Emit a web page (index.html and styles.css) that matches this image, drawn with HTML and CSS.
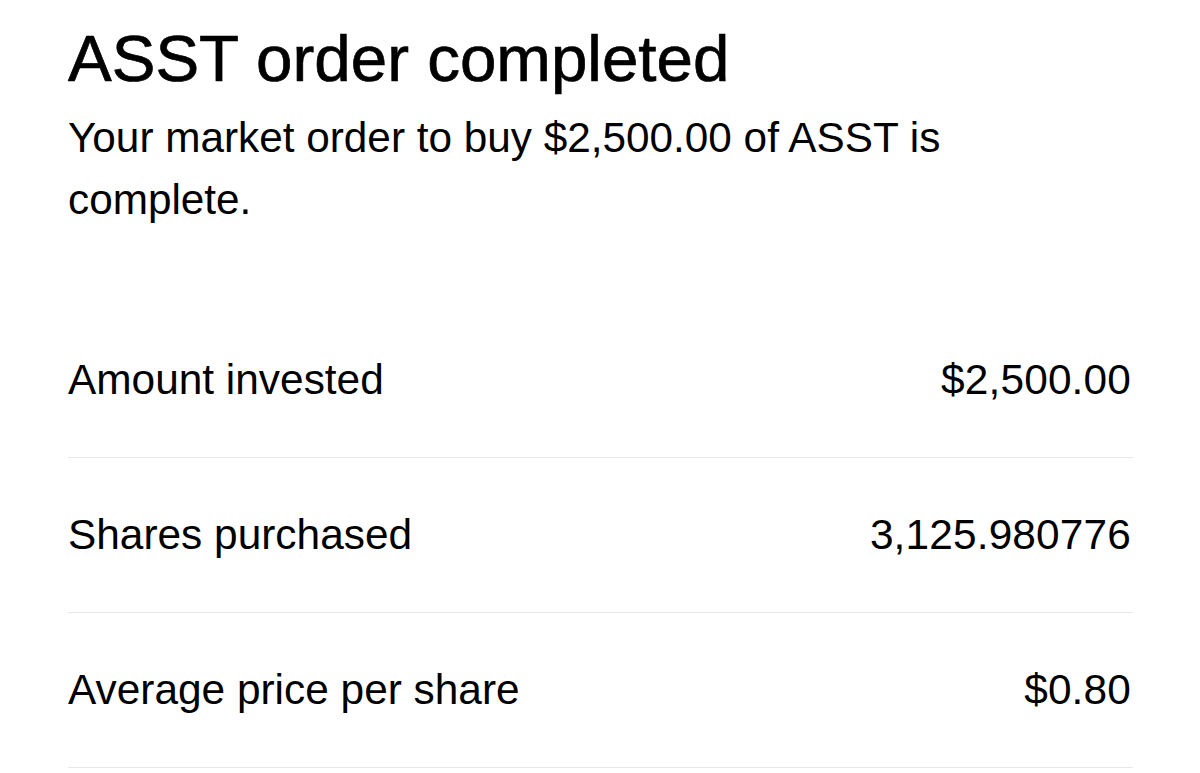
FILE: index.html
```html
<!DOCTYPE html>
<html lang="en">
<head>
<meta charset="utf-8">
<title>ASST order completed</title>
<link rel="stylesheet" href="styles.css">
</head>
<body>
<main class="page">
  <header class="head">
    <h1 class="title">ASST order completed</h1>
    <p class="subtitle">Your market order to buy $2,500.00 of ASST is complete.</p>
  </header>
  <dl class="details">
    <div class="row">
      <dt class="label">Amount invested</dt>
      <dd class="value">$2,500.00</dd>
    </div>
    <div class="row">
      <dt class="label">Shares purchased</dt>
      <dd class="value">3,125.980776</dd>
    </div>
    <div class="row">
      <dt class="label">Average price per share</dt>
      <dd class="value">$0.80</dd>
    </div>
  </dl>
</main>
</body>
</html>
```
FILE: styles.css
```css
html, body {
  margin: 0;
  padding: 0;
  background: #ffffff;
}
body {
  font-family: "Liberation Sans", Arial, sans-serif;
  color: #000000;
}
.page {
  padding: 23px 67px 0 68px;
}
.head {
  display: flex;
  flex-direction: column;
  gap: 12px;
}
.title {
  margin: 0;
  font-size: 65.5px;
  font-weight: 400;
  line-height: 72px;
  -webkit-text-stroke: 0.7px #000000;
}
.subtitle {
  margin: 0;
  font-size: 42.3px;
  line-height: 62px;
  width: 900px;
}
.details {
  margin: 72px 0 0 0;
}
.row {
  display: flex;
  justify-content: space-between;
  align-items: center;
  padding: 52px 0;
  border-bottom: 1px solid #e8e8e8;
}
.label, .value {
  margin: 0;
  font-size: 42.4px;
  line-height: 50px;
}
.value {
  margin-right: 2px;
  letter-spacing: 0.15px;
}
```
